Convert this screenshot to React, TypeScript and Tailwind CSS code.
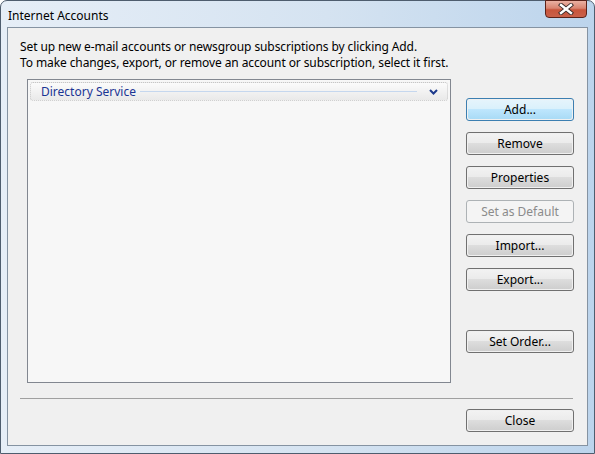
import type { ReactNode } from "react";

type BtnProps = {
  children: ReactNode;
  variant?: "normal" | "default" | "disabled";
  className?: string;
};

const DialogButton = ({ children, variant = "normal", className = "" }: BtnProps) => {
  if (variant === "disabled") {
    return (
      <div
        className={`h-[23px] w-[108px] rounded-[3px] border border-[#adb2b5] bg-[#f4f4f4] flex items-center justify-center text-[#8b8b8b] ${className}`}
      >
        {children}
      </div>
    );
  }
  const isDefault = variant === "default";
  return (
    <div
      className={`h-[23px] w-[108px] rounded-[3px] border p-px flex ${
        isDefault ? "border-[#3c7fb1]" : "border-[#707070]"
      } ${className}`}
    >
      <div
        className={`flex-1 rounded-[2px] flex items-center justify-center text-black ${
          isDefault
            ? "bg-[linear-gradient(to_bottom,#e5f4fc_0%,#d9f0fc_48%,#bee6fd_50%,#a9dbf6_100%)]"
            : "bg-[linear-gradient(to_bottom,#f2f2f2_0%,#ebebeb_48%,#dddddd_50%,#cfcfcf_100%)]"
        }`}
      >
        {children}
      </div>
    </div>
  );
};

const CloseGlyph = () => (
  <svg width="16" height="12" viewBox="0 0 16 12">
    <path d="M3 2 L13 10 M13 2 L3 10" stroke="#3a2a28" strokeWidth="4.2" strokeLinecap="square" />
    <path d="M3 2 L13 10 M13 2 L3 10" stroke="#ffffff" strokeWidth="2.4" strokeLinecap="square" />
  </svg>
);

export default function App() {
  const buttons: { label: string; variant?: "normal" | "default" | "disabled" }[] = [
    { label: "Add...", variant: "default" },
    { label: "Remove" },
    { label: "Properties" },
    { label: "Set as Default", variant: "disabled" },
    { label: "Import..." },
    { label: "Export..." },
  ];

  return (
    <div
      className="w-[595px] h-[454px] rounded-t-[7px] border border-[#4e5d6e] bg-[linear-gradient(to_right,#e6eef7_0%,#d5e3f1_55%,#bcd4ec_100%)] flex flex-col px-[6px] pb-[7px] text-[12px] leading-[15px]"
      style={{ fontFamily: '"Noto Sans", "Open Sans", sans-serif' }}
    >
      {/* title bar */}
      <div className="h-[26px] flex items-start shrink-0">
        <div className="pt-[7px] pl-[1px] text-black">Internet Accounts</div>
        <div className="ml-auto mr-[1px] w-[42px] h-[18px] -mt-px rounded-b-[4px] border border-[#5b2219] bg-[linear-gradient(to_bottom,#eab1a3_0%,#d98470_45%,#c8553c_55%,#c9614a_100%)] flex items-center justify-center">
          <CloseGlyph />
        </div>
      </div>

      {/* client area */}
      <div className="flex-1 border border-[#8593a2] bg-[#f0f0f0] flex flex-col px-[12px] pt-[11px]">
        <div className="text-black leading-[16px] tracking-[-0.1px]">
          <div>Set up new e-mail accounts or newsgroup subscriptions by clicking Add.</div>
          <div>To make changes, export, or remove an account or subscription, select it first.</div>
        </div>

        <div className="flex mt-[8px]">
          <div className="ml-[7px] w-[424px] h-[304px] border border-[#828790] bg-[#f7f7f7] p-[2px]">
            <div className="h-[19px] rounded-[3px] border border-dotted border-[#c6c6c6] bg-[linear-gradient(to_bottom,#fbfbfb,#e9e9e9)] flex items-center pl-[10px] pr-[9px]">
              <span className="text-[#1a3494]">Directory Service</span>
              <div className="flex-1 h-px bg-[#c5d7ee] mx-[4px]" />
              <svg width="9" height="6" viewBox="0 0 9 6" className="ml-[8px]">
                <path d="M1 1 L4.5 4.5 L8 1" stroke="#1c3a8c" strokeWidth="2" fill="none" />
              </svg>
            </div>
          </div>

          <div className="ml-[15px] pt-[19px] flex flex-col gap-[11px]">
            {buttons.map((b) => (
              <DialogButton key={b.label} variant={b.variant}>
                {b.label}
              </DialogButton>
            ))}
            <DialogButton className="mt-[28px]">Set Order...</DialogButton>
          </div>
        </div>

        <div className="mt-[15px] mr-[2px] h-px bg-[#a0a0a0]" />

        <div className="flex mt-[10px] pl-[446px]">
          <DialogButton>Close</DialogButton>
        </div>
      </div>
    </div>
  );
}
